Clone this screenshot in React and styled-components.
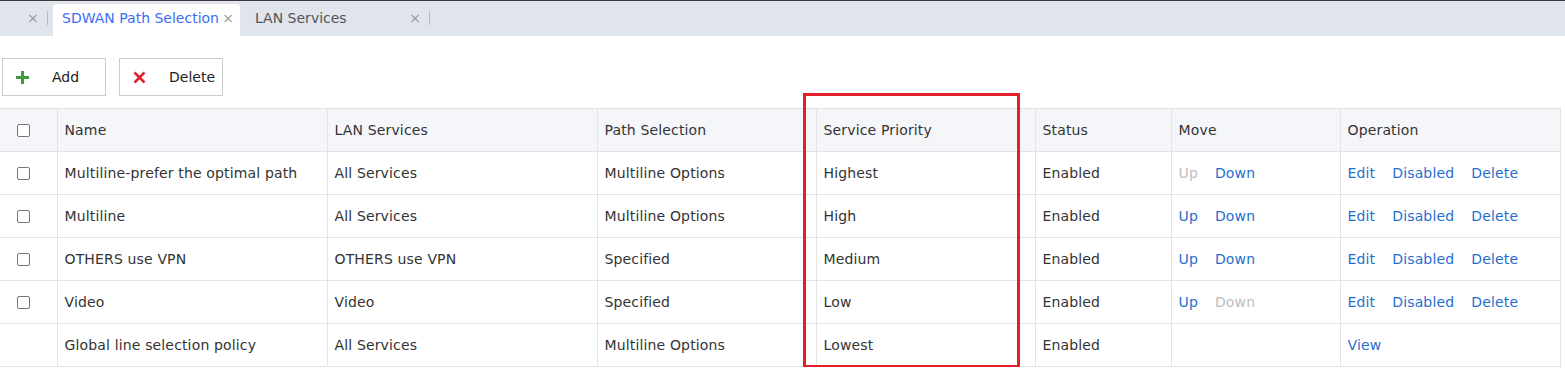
import React from 'react';
import styled, { createGlobalStyle } from 'styled-components';

const GlobalStyle = createGlobalStyle`
  body {
    margin: 0;
    background: #fff;
    font-family: "DejaVu Sans", "Noto Sans", sans-serif;
    font-size: 14px;
    letter-spacing: 0.15px;
    color: #333;
  }
`;

const Page = styled.div`
  width: 1565px;
  position: relative;
`;

const TabBar = styled.div`
  display: flex;
  align-items: flex-end;
  height: 36px;
  background: #dfe4ed;
  border-top: 1px solid #3a3a3a;
  box-sizing: border-box;
`;

const Tab = styled.div`
  display: flex;
  align-items: center;
  height: 32px;
  box-sizing: border-box;
  padding: ${p => p.$pad || '0 8px'};
  padding-bottom: 4px;
  width: ${p => p.$width}px;
  background: ${p => (p.$active ? '#fff' : 'transparent')};
  border-radius: 4px 4px 0 0;
  color: ${p => (p.$active ? '#3b6ef5' : '#555')};
  font-size: 14px;
  letter-spacing: 0;
`;

const TabLabel = styled.span`
  flex: 1;
  white-space: nowrap;
`;

const Close = styled.span`
  color: #9a9a9a;
  font-size: 14px;
  line-height: 1;
`;

const Sep = styled.span`
  width: 1px;
  height: 14px;
  background: #bbb;
  margin-left: 8px;
`;

const Toolbar = styled.div`
  display: flex;
  gap: 13px;
  padding: 22px 0 12px 2px;
`;

const Button = styled.button`
  display: flex;
  align-items: center;
  width: 104px;
  height: 38px;
  border: 1px solid #ccc;
  background: #fff;
  font-family: inherit;
  font-size: 14px;
  color: #222;
  padding: 0 0 0 13px;
  cursor: pointer;
`;

const Icon = styled.svg`
  width: 13px;
  height: 13px;
  margin-right: ${p => p.$gap}px;
`;

const Table = styled.table`
  border-collapse: collapse;
  width: 1560px;
  table-layout: fixed;
`;

const Th = styled.th`
  height: 43px;
  box-sizing: border-box;
  background: #f5f6fa;
  border: 1px solid #e3e3e3;
  text-align: left;
  font-weight: normal;
  padding: 0 7px;
  color: #333;
  &:first-child { border-left: none; }
`;

const Td = styled.td`
  height: 43px;
  box-sizing: border-box;
  border: 1px solid #e3e3e3;
  padding: 0 7px;
  white-space: nowrap;
  &:first-child { border-left: none; }
`;

const CheckCell = styled.div`
  display: flex;
  padding: 1px 0 0 10px;
`;

const Box = styled.span`
  display: inline-block;
  width: 13px;
  height: 13px;
  box-sizing: border-box;
  border: 1px solid #767676;
  border-radius: 2px;
  background: #fff;
`;

const Link = styled.span`
  color: ${p => (p.$off ? '#bdbdbd' : '#1f6fd0')};
  margin-right: ${p => p.$mr || 0}px;
  cursor: pointer;
`;

const Highlight = styled.div`
  position: absolute;
  left: 803px;
  top: 93px;
  width: 217px;
  height: 275px;
  box-sizing: border-box;
  border: 3px solid #e3202a;
  pointer-events: none;
`;

const rows = [
  { name: 'Multiline-prefer the optimal path', lan: 'All Services', path: 'Multiline Options', prio: 'Highest', up: false, down: true },
  { name: 'Multiline', lan: 'All Services', path: 'Multiline Options', prio: 'High', up: true, down: true },
  { name: 'OTHERS use VPN', lan: 'OTHERS use VPN', path: 'Specified', prio: 'Medium', up: true, down: true },
  { name: 'Video', lan: 'Video', path: 'Specified', prio: 'Low', up: true, down: false },
];

const widths = [57, 270, 270, 219, 219, 136, 169, 220];

export default function App() {
  return (
    <Page>
      <GlobalStyle />
      <TabBar>
        <Tab $width={53} $pad="0 0 0 27px">
          <Close>×</Close>
          <Sep />
        </Tab>
        <Tab $active $width={187} $pad="0 6px 0 9px">
          <TabLabel>SDWAN Path Selection</TabLabel>
          <Close>×</Close>
        </Tab>
        <Tab $width={190} $pad="0 0 0 15px">
          <TabLabel>LAN Services</TabLabel>
          <Close>×</Close>
          <Sep />
        </Tab>
      </TabBar>
      <Toolbar>
        <Button>
          <Icon viewBox="0 0 13 13" $gap={23}>
            <path d="M5 0h3v5h5v3H8v5H5V8H0V5h5z" fill="#3f9a3c" />
          </Icon>
          Add
        </Button>
        <Button>
          <Icon viewBox="0 0 13 13" $gap={23}>
            <path d="M1.5 1.5l10 10M11.5 1.5l-10 10" stroke="#e0242a" strokeWidth="2.6" />
          </Icon>
          Delete
        </Button>
      </Toolbar>
      <Table>
        <colgroup>
          {widths.map((w, i) => <col key={i} style={{ width: w }} />)}
        </colgroup>
        <thead>
          <tr>
            <Th><CheckCell><Box /></CheckCell></Th>
            <Th>Name</Th>
            <Th>LAN Services</Th>
            <Th>Path Selection</Th>
            <Th>Service Priority</Th>
            <Th>Status</Th>
            <Th>Move</Th>
            <Th>Operation</Th>
          </tr>
        </thead>
        <tbody>
          {rows.map(r => (
            <tr key={r.name}>
              <Td><CheckCell><Box /></CheckCell></Td>
              <Td>{r.name}</Td>
              <Td>{r.lan}</Td>
              <Td>{r.path}</Td>
              <Td>{r.prio}</Td>
              <Td>Enabled</Td>
              <Td>
                <Link $off={!r.up} $mr={17}>Up</Link>
                <Link $off={!r.down}>Down</Link>
              </Td>
              <Td>
                <Link $mr={17}>Edit</Link>
                <Link $mr={17}>Disabled</Link>
                <Link>Delete</Link>
              </Td>
            </tr>
          ))}
          <tr>
            <Td />
            <Td>Global line selection policy</Td>
            <Td>All Services</Td>
            <Td>Multiline Options</Td>
            <Td>Lowest</Td>
            <Td>Enabled</Td>
            <Td />
            <Td><Link>View</Link></Td>
          </tr>
        </tbody>
      </Table>
      <Highlight />
    </Page>
  );
}
